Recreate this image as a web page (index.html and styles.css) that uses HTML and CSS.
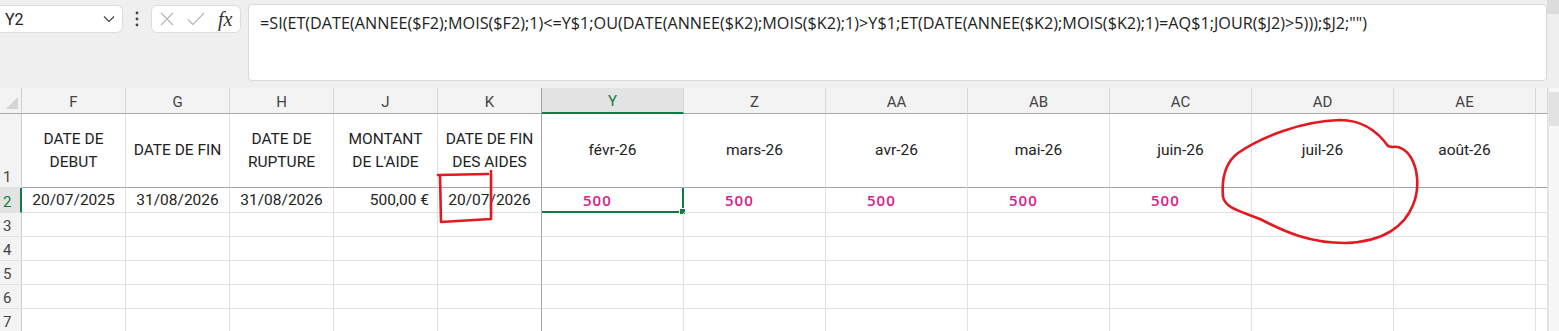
FILE: index.html
```html
<!DOCTYPE html>
<html lang="fr">
<head>
    <meta charset="UTF-8">
    <title>Feuille - aides</title>
    <link rel="stylesheet" href="styles.css">
</head>
<body>
    <div class="toolbar">
        <div class="name-box">
            <span class="name-text">Y2</span>
            <svg class="chevron" width="12" height="8" viewBox="0 0 12 8"><path d="M1 1.5 L6 6.5 L11 1.5" fill="none" stroke="#444" stroke-width="1.2"/></svg>
        </div>
        <div class="dots">
            <svg width="4" height="16" viewBox="0 0 4 16"><circle cx="2" cy="2" r="1.4" fill="#444"/><circle cx="2" cy="8" r="1.4" fill="#444"/><circle cx="2" cy="14" r="1.4" fill="#444"/></svg>
        </div>
        <div class="fx-box">
            <svg class="fx-icon" width="14" height="14" viewBox="0 0 14 14"><path d="M1 1 L13 13 M13 1 L1 13" stroke="#b4b4b4" stroke-width="1.1" fill="none"/></svg>
            <svg class="fx-icon" width="18" height="14" viewBox="0 0 18 14"><path d="M1 7.5 L6 12.5 L17 1" stroke="#b4b4b4" stroke-width="1.1" fill="none"/></svg>
            <span class="fx">fx</span>
        </div>
        <div class="formula">=SI(ET(DATE(ANNEE($F2);MOIS($F2);1)&lt;=Y$1;OU(DATE(ANNEE($K2);MOIS($K2);1)&gt;Y$1;ET(DATE(ANNEE($K2);MOIS($K2);1)=AQ$1;JOUR($J2)&gt;5)));$J2;"")</div>
        <div class="toolbar-edge"></div>
    </div>

    <div class="sheet">
        <div class="grid">
            <!-- column headers -->
            <div class="cell corner"><span class="corner-mark"></span></div>
            <div class="cell col-head">F</div>
            <div class="cell col-head">G</div>
            <div class="cell col-head">H</div>
            <div class="cell col-head">J</div>
            <div class="cell col-head freeze">K</div>
            <div class="cell col-head selected-col">Y</div>
            <div class="cell col-head">Z</div>
            <div class="cell col-head">AA</div>
            <div class="cell col-head">AB</div>
            <div class="cell col-head">AC</div>
            <div class="cell col-head">AD</div>
            <div class="cell col-head">AE</div>
            <div class="cell col-head"></div>

            <!-- row 1 -->
            <div class="cell row-head">1</div>
            <div class="cell title-cell">DATE DE<br>DEBUT</div>
            <div class="cell title-cell">DATE DE FIN</div>
            <div class="cell title-cell">DATE DE<br>RUPTURE</div>
            <div class="cell title-cell">MONTANT<br>DE L'AIDE</div>
            <div class="cell title-cell freeze">DATE DE FIN<br>DES AIDES</div>
            <div class="cell title-cell">févr-26</div>
            <div class="cell title-cell">mars-26</div>
            <div class="cell title-cell">avr-26</div>
            <div class="cell title-cell">mai-26</div>
            <div class="cell title-cell">juin-26</div>
            <div class="cell title-cell">juil-26</div>
            <div class="cell title-cell">août-26</div>
            <div class="cell title-cell"></div>

            <!-- row 2 -->
            <div class="cell row-head selected-row">2</div>
            <div class="cell center">20/07/2025</div>
            <div class="cell center">31/08/2026</div>
            <div class="cell center">31/08/2026</div>
            <div class="cell money">500,00 €</div>
            <div class="cell center freeze">20/07/2026</div>
            <div class="cell value active">500<span class="fill-handle"></span></div>
            <div class="cell value">500</div>
            <div class="cell value">500</div>
            <div class="cell value">500</div>
            <div class="cell value">500</div>
            <div class="cell"></div>
            <div class="cell"></div>
            <div class="cell"></div>

            <!-- rows 3 to 7 -->
            <div class="cell row-head">3</div>
            <div class="cell"></div><div class="cell"></div><div class="cell"></div><div class="cell"></div><div class="cell freeze"></div>
            <div class="cell"></div><div class="cell"></div><div class="cell"></div><div class="cell"></div><div class="cell"></div><div class="cell"></div><div class="cell"></div><div class="cell"></div>

            <div class="cell row-head">4</div>
            <div class="cell"></div><div class="cell"></div><div class="cell"></div><div class="cell"></div><div class="cell freeze"></div>
            <div class="cell"></div><div class="cell"></div><div class="cell"></div><div class="cell"></div><div class="cell"></div><div class="cell"></div><div class="cell"></div><div class="cell"></div>

            <div class="cell row-head">5</div>
            <div class="cell"></div><div class="cell"></div><div class="cell"></div><div class="cell"></div><div class="cell freeze"></div>
            <div class="cell"></div><div class="cell"></div><div class="cell"></div><div class="cell"></div><div class="cell"></div><div class="cell"></div><div class="cell"></div><div class="cell"></div>

            <div class="cell row-head">6</div>
            <div class="cell"></div><div class="cell"></div><div class="cell"></div><div class="cell"></div><div class="cell freeze"></div>
            <div class="cell"></div><div class="cell"></div><div class="cell"></div><div class="cell"></div><div class="cell"></div><div class="cell"></div><div class="cell"></div><div class="cell"></div>

            <div class="cell row-head">7</div>
            <div class="cell"></div><div class="cell"></div><div class="cell"></div><div class="cell"></div><div class="cell freeze"></div>
            <div class="cell"></div><div class="cell"></div><div class="cell"></div><div class="cell"></div><div class="cell"></div><div class="cell"></div><div class="cell"></div><div class="cell"></div>
        </div>
        <div class="vscroll">
            <div class="vscroll-top"></div>
        </div>
    </div>

    <!-- hand drawn red marks on top of the sheet -->
    <svg class="marks" width="1559" height="331" viewBox="0 0 1559 331">
        <path d="M438 175 L488 174 M491 171 L491 219 L441 222 L440 175" fill="none" stroke="#e3191f" stroke-width="2.6" stroke-linecap="round" stroke-linejoin="round"/>
        <path d="M1388 146 C1375 128 1360 120 1340 120 C1300 121 1260 138 1238 153 C1222 165 1222 185 1223 197 C1226 210 1245 212 1262 220 C1285 232 1310 243 1345 243 C1385 242 1405 225 1413 205 C1420 188 1418 168 1410 156 C1405 149 1398 146 1392 147 L1388 146" fill="none" stroke="#e3191f" stroke-width="2.6" stroke-linecap="round" stroke-linejoin="round"/>
    </svg>
</body>
</html>
```

FILE: styles.css
```css
body {
    margin: 0;
    background-color: #fff;
    font-family: Roboto, "Liberation Sans", sans-serif;
    color: #222;
    overflow: hidden;
    position: relative;
}

.toolbar {
    height: 88px;
    background-color: #efefef;
    display: flex;
    flex-flow: row nowrap;
    align-items: flex-start;
    padding-top: 5px;
    box-sizing: border-box;
}
.name-box {
    width: 123px;
    height: 28px;
    background-color: #fff;
    border: 1px solid #dcdcdc;
    border-left: 0;
    border-radius: 0 6px 6px 0;
    box-sizing: border-box;
    display: flex;
    align-items: center;
    justify-content: space-between;
    padding: 0 7px 0 5px;
}
.name-text {
    font-size: 16px;
    color: #222;
}
.dots {
    width: 28px;
    height: 28px;
    display: flex;
    align-items: center;
    justify-content: center;
}
.fx-box {
    width: 90px;
    height: 28px;
    background-color: #fff;
    border: 1px solid #dcdcdc;
    border-radius: 6px;
    box-sizing: border-box;
    display: flex;
    align-items: center;
    gap: 13px;
    padding-left: 8px;
    margin-right: 7px;
}
.fx {
    font-family: "Liberation Serif", "DejaVu Serif", serif;
    font-style: italic;
    font-size: 20px;
    color: #333;
}
.formula {
    width: 1299px;
    height: 77px;
    margin-top: -1px;
    background-color: #fff;
    border: 1px solid #d8d8d8;
    border-radius: 4px;
    box-sizing: border-box;
    padding: 7px 0 0 11px;
    font-family: "Open Sans", "Noto Sans", sans-serif;
    font-size: 16.2px;
    color: #222;
    white-space: nowrap;
    overflow: hidden;
}
.toolbar-edge {
    width: 12px;
    height: 14px;
    margin-top: -5px;
    background-color: #dcdcdc;
}

.sheet {
    display: flex;
    flex-flow: row nowrap;
}
.grid {
    display: grid;
    grid-template-columns: 22px repeat(5, 104px) repeat(7, 142px) 12px;
    grid-template-rows: 26px 74px 25px repeat(5, 24px);
}
.vscroll {
    width: 11px;
    background-color: #f7f7f7;
    border-left: 1px solid #e6e6e6;
}
.vscroll-top {
    height: 34px;
    margin-top: 4px;
    background-color: #e2e2e2;
}

.cell {
    position: relative;
    border-right: 1px solid #e1e1e1;
    border-bottom: 1px solid #e1e1e1;
    box-sizing: border-box;
    font-size: 15.5px;
    color: #222;
    display: flex;
    align-items: center;
    white-space: nowrap;
}

.corner {
    background-color: #f3f3f3;
    border-right: 1px solid #cfcfcf;
    border-bottom: 1px solid #a9a9a9;
}
.corner-mark {
    position: absolute;
    right: 3px;
    bottom: 4px;
    width: 12px;
    height: 12px;
    background-color: #d4d4d4;
    clip-path: polygon(100% 0, 100% 100%, 0 100%);
}
.col-head {
    background-color: #f3f3f3;
    border-right: 1px solid #dadada;
    border-bottom: 1px solid #a9a9a9;
    justify-content: center;
    font-size: 15px;
    color: #444;
    padding-top: 2px;
}
.selected-col {
    background-color: #e3e3e3;
    color: #107c41;
    border-bottom: 2px solid #107c41;
}
.row-head {
    background-color: #f3f3f3;
    border-right: 1px solid #cfcfcf;
    align-items: flex-end;
    padding: 0 0 1px 3px;
    font-size: 15px;
    color: #444;
}
.selected-row {
    background-color: #e3e3e3;
    color: #107c41;
    border-right: 2px solid #107c41;
}

.title-cell {
    justify-content: center;
    text-align: center;
    line-height: 23px;
    border-bottom: 1px solid #a3a3a3;
}
.center {
    justify-content: center;
}
.money {
    justify-content: flex-end;
    padding-right: 8px;
}
.value {
    padding-left: 41px;
    font-family: "Open Sans", sans-serif;
    font-weight: 600;
    font-size: 15px;
    color: #d81b8c;
    letter-spacing: 1px;
}
.freeze {
    border-right: 1px solid #a3a3a3;
}
.active {
    border-right: 2px solid #107c41;
    border-bottom: 2px solid #107c41;
}
.fill-handle {
    position: absolute;
    right: -4px;
    bottom: -4px;
    width: 5px;
    height: 5px;
    background-color: #107c41;
    border: 1px solid #fff;
}

.marks {
    position: absolute;
    top: 0;
    left: 0;
    pointer-events: none;
}
```
